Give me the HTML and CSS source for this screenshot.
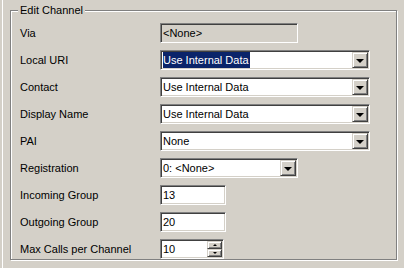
FILE: index.html
```html
<!DOCTYPE html>
<html lang="en">
<head>
    <meta charset="UTF-8">
    <title>Edit Channel</title>
    <link rel="stylesheet" href="styles.css">
</head>
<body>
    <div class="panel">
        <fieldset class="group">
            <legend>Edit Channel</legend>
            <div class="form">
                <label>Via</label>
                <div class="field disabled w-mid">&lt;None&gt;</div>

                <label>Local URI</label>
                <div class="combo w-wide">
                    <span class="value"><span class="selected">Use Internal Data</span></span>
                    <span class="drop"><span class="arrow"></span></span>
                </div>

                <label>Contact</label>
                <div class="combo w-wide">
                    <span class="value">Use Internal Data</span>
                    <span class="drop"><span class="arrow"></span></span>
                </div>

                <label>Display Name</label>
                <div class="combo w-wide">
                    <span class="value">Use Internal Data</span>
                    <span class="drop"><span class="arrow"></span></span>
                </div>

                <label>PAI</label>
                <div class="combo w-wide">
                    <span class="value">None</span>
                    <span class="drop"><span class="arrow"></span></span>
                </div>

                <label>Registration</label>
                <div class="combo w-mid">
                    <span class="value">0: &lt;None&gt;</span>
                    <span class="drop"><span class="arrow"></span></span>
                </div>

                <label>Incoming Group</label>
                <div class="field w-num">13</div>

                <label>Outgoing Group</label>
                <div class="field w-num">20</div>

                <label>Max Calls per Channel</label>
                <div class="spin">
                    <span class="value">10</span>
                    <span class="spin-buttons">
                        <span class="spin-btn"><span class="arrow-up"></span></span>
                        <span class="spin-btn"><span class="arrow-down"></span></span>
                    </span>
                </div>
            </div>
        </fieldset>
    </div>
</body>
</html>
```

FILE: styles.css
```css
body {
    margin: 0;
    background-color: #d4d0c8;
    font-family: "Liberation Sans", Arial, sans-serif;
    font-size: 11px;
    color: #000;
}

.panel {
    height: 268px;
    margin-left: 2px;
    border-left: 1px solid #fff;
    padding: 4px 0 0 7px;
    box-sizing: border-box;
}

/* etched group box */
.group {
    width: 387px;
    margin: 0;
    padding: 6px 0 0 9px;
    border: 1px solid #808080;
    box-shadow: inset 1px 1px 0 #fff, 1px 1px 0 #fff;
    box-sizing: border-box;
}

.group legend {
    padding: 0 2px;
    margin-left: -2px;
    line-height: 13px;
    background-color: #d4d0c8;
}

.form {
    display: grid;
    grid-template-columns: 140px auto;
    grid-auto-rows: 20px;
    row-gap: 7px;
    align-items: center;
}

.form label {
    line-height: 13px;
}

/* sunken 3d edit box */
.field,
.combo,
.spin {
    height: 20px;
    box-sizing: border-box;
    border: 1px solid;
    border-color: #808080 #fff #fff #808080;
    box-shadow: inset 1px 1px 0 #404040, inset -1px -1px 0 #d4d0c8;
    background-color: #fff;
    line-height: 18px;
}

.field {
    padding-left: 2px;
}

.field.disabled {
    background-color: #d4d0c8;
}

.w-wide { width: 210px; }
.w-mid { width: 138px; }
.w-num { width: 66px; }

.combo,
.spin {
    display: flex;
    padding: 1px;
}

.combo .value,
.spin .value {
    flex: 1;
    padding-left: 1px;
    line-height: 16px;
    white-space: nowrap;
    overflow: hidden;
}

.selected {
    display: inline-block;
    background-color: #0a246a;
    color: #fff;
    padding-right: 1px;
}

/* raised 3d button */
.drop,
.spin-btn {
    display: flex;
    align-items: center;
    justify-content: center;
    box-sizing: border-box;
    background-color: #d4d0c8;
    border: 1px solid;
    border-color: #d4d0c8 #404040 #404040 #d4d0c8;
    box-shadow: inset 1px 1px 0 #fff, inset -1px -1px 0 #808080;
}

.drop {
    width: 16px;
    height: 16px;
}

.arrow {
    width: 0;
    height: 0;
    border-left: 4px solid transparent;
    border-right: 4px solid transparent;
    border-top: 4px solid #000;
    margin-top: 1px;
}

.spin {
    width: 64px;
}

.spin-buttons {
    display: flex;
    flex-direction: column;
}

.spin-btn {
    width: 15px;
    height: 8px;
}

.arrow-up,
.arrow-down {
    width: 0;
    height: 0;
    border-left: 2px solid transparent;
    border-right: 2px solid transparent;
}

.arrow-up {
    border-bottom: 2px solid #000;
}

.arrow-down {
    border-top: 2px solid #000;
}
```
